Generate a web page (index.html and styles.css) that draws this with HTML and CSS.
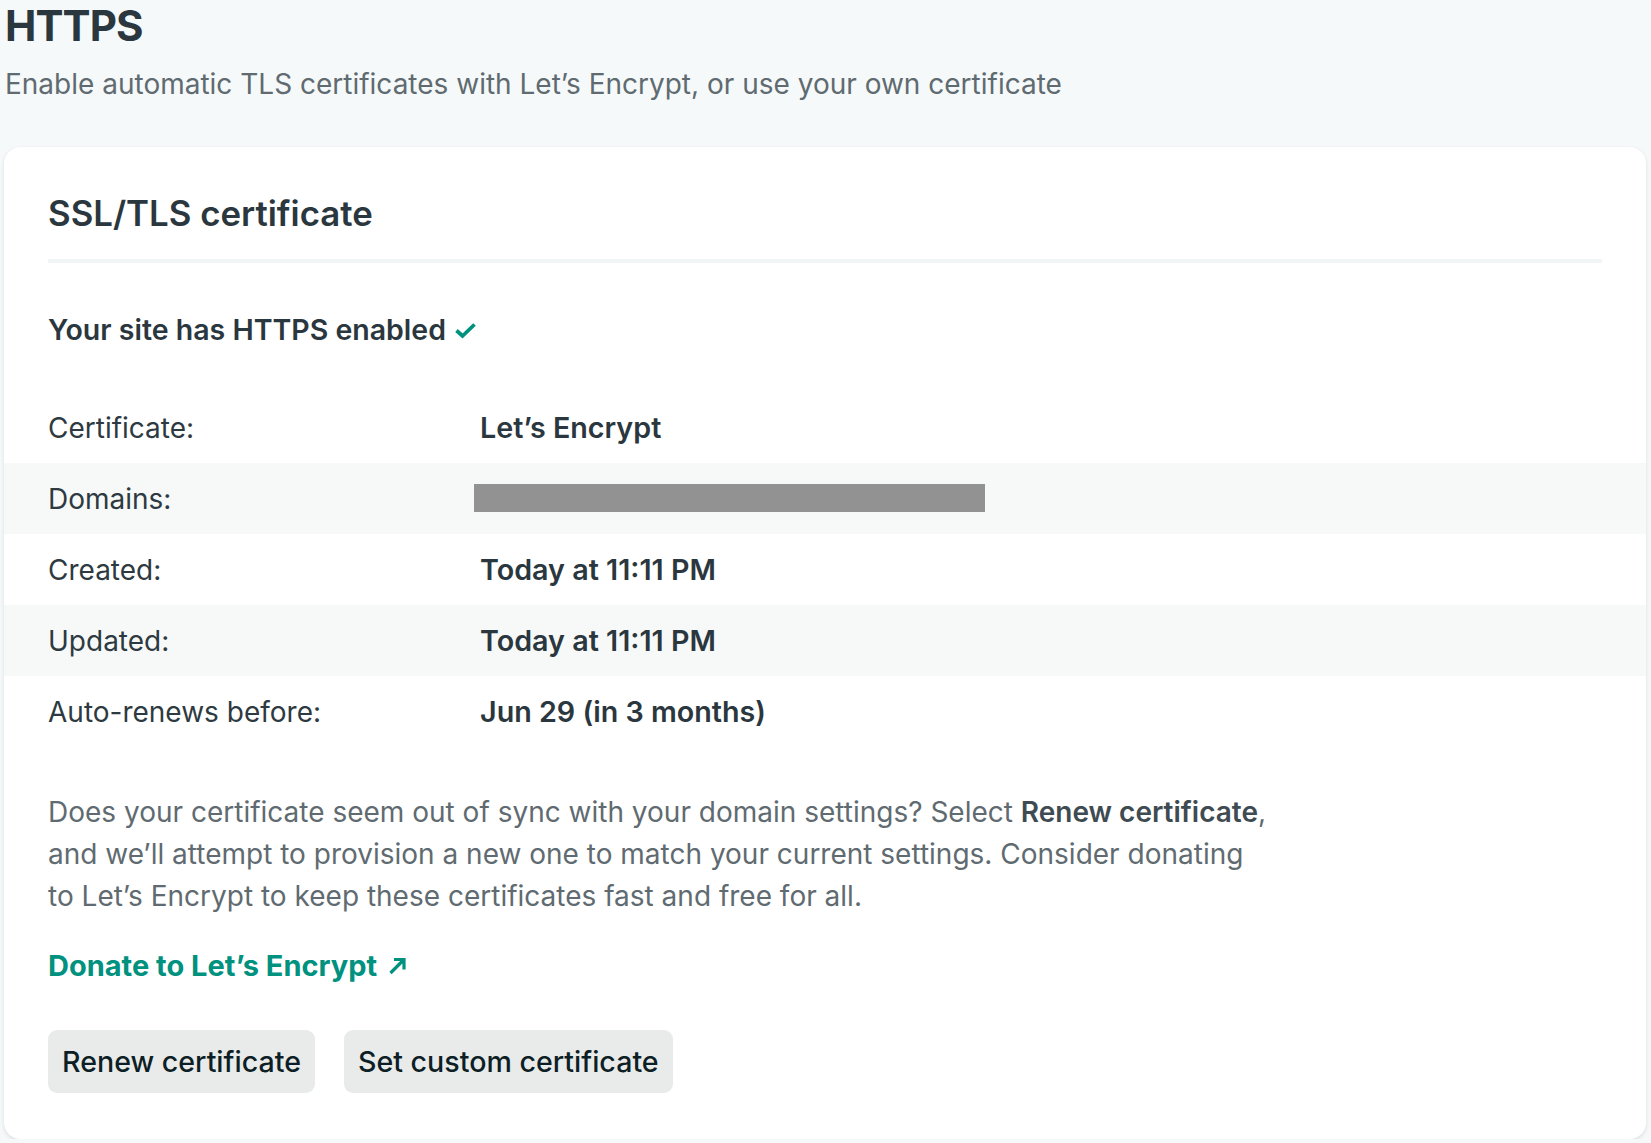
FILE: index.html
```html
<!DOCTYPE html>
<html lang="en">
<head>
<meta charset="utf-8">
<title>HTTPS</title>
<link rel="stylesheet" href="styles.css">
</head>
<body>
<main class="page">
  <header class="page-head">
    <h1 class="page-title">HTTPS</h1>
    <p class="page-sub">Enable automatic TLS certificates with Let’s Encrypt, or use your own certificate</p>
  </header>

  <section class="card">
    <h2 class="card-title">SSL/TLS certificate</h2>

    <p class="status">Your site has HTTPS enabled
      <svg class="check" width="23" height="18" viewBox="0 0 23 18" aria-hidden="true"><path d="M2.5 8.5 L8.5 14 L20.5 2.5" fill="none" stroke="#00917f" stroke-width="3.8" stroke-linecap="butt" stroke-linejoin="miter"/></svg>
    </p>

    <dl class="details">
      <div class="row"><dt>Certificate:</dt><dd>Let’s Encrypt</dd></div>
      <div class="row alt"><dt>Domains:</dt><dd><span class="redacted"></span></dd></div>
      <div class="row"><dt>Created:</dt><dd>Today at 11:11 PM</dd></div>
      <div class="row alt"><dt>Updated:</dt><dd>Today at 11:11 PM</dd></div>
      <div class="row"><dt>Auto-renews before:</dt><dd>Jun 29 (in 3 months)</dd></div>
    </dl>

    <p class="note">Does your certificate seem out of sync with your domain settings? Select <strong>Renew certificate</strong>, and we’ll attempt to provision a new one to match your current settings. Consider donating to Let’s Encrypt to keep these certificates fast and free for all.</p>

    <a class="donate" href="#">Donate to Let’s Encrypt
      <svg class="ext" width="19" height="18" viewBox="0 0 19 18" aria-hidden="true"><path d="M2.5 16 L15 3.5 M6 2.5 H16 V12.5" fill="none" stroke="#00917f" stroke-width="3.2" stroke-linecap="butt" stroke-linejoin="miter"/></svg>
    </a>

    <div class="actions">
      <button class="btn" type="button">Renew certificate</button>
      <button class="btn" type="button">Set custom certificate</button>
    </div>
  </section>
</main>
</body>
</html>
```

FILE: styles.css
```css
* { box-sizing: border-box; }

html, body {
  margin: 0;
  padding: 0;
  background: #f6f9f9;
}

body {
  font-family: Inter, "Noto Sans", "Liberation Sans", sans-serif;
  color: #2e3a41;
}

.page {
  padding: 0 5px 0 4px;
}

.page-head {
  padding-left: 1px;
}

.page-title {
  margin: 0;
  font-size: 42px;
  line-height: 52px;
  font-weight: 700;
  color: #2b373e;
  letter-spacing: -0.9px;
}

.page-sub {
  margin: 14px 0 0;
  font-size: 28px;
  line-height: 36px;
  color: #5f6b71;
}

.card {
  margin-top: 45px;
  background: #fff;
  border-radius: 16px;
  box-shadow: 0 2px 4px rgba(14, 30, 37, 0.10), 0 0 1px rgba(14, 30, 37, 0.08);
  padding: 40px 44px 46px;
}

.card-title {
  margin: 0;
  font-size: 34.8px;
  line-height: 52px;
  font-weight: 600;
  color: #2b373e;
  padding-bottom: 20px;
  border-bottom: 4px solid #f2f5f5;
}

.status {
  margin: 49px 0 0;
  font-size: 28.5px;
  line-height: 36px;
  font-weight: 600;
  color: #2b373e;
  display: flex;
  align-items: center;
  gap: 8px;
}

.check {
  display: block;
  margin-top: 1px;
}

.details {
  margin: 44px -44px 0;
}

.row {
  display: grid;
  grid-template-columns: 432px 1fr;
  align-items: center;
  height: 71px;
  padding: 0 44px;
  font-size: 28px;
}

.row.alt {
  background: #f7f9f9;
}

.row dt {
  color: #2e3a41;
}

.row dd {
  margin: 0;
  font-weight: 600;
  font-size: 28.7px;
  color: #2b373e;
}

.redacted {
  display: block;
  width: 511px;
  height: 28px;
  margin-left: -6px;
  margin-top: -2px;
  background: #929292;
}

.note {
  margin: 44px 0 0;
  max-width: 1225px;
  font-size: 28px;
  line-height: 42px;
  color: #5f6b71;
}

.note strong {
  font-weight: 600;
  color: #3f4b52;
}

.donate {
  display: inline-flex;
  align-items: center;
  gap: 11px;
  margin-top: 31px;
  font-size: 29px;
  line-height: 36px;
  font-weight: 700;
  color: #00917f;
  text-decoration: none;
}

.actions {
  display: flex;
  gap: 29px;
  margin-top: 46px;
}

.btn {
  height: 63px;
  padding: 0 14px;
  border: 0;
  border-radius: 9px;
  background: #e9ebeb;
  font-family: inherit;
  font-size: 28.6px;
  font-weight: 500;
  color: #0e1e25;
}
```
